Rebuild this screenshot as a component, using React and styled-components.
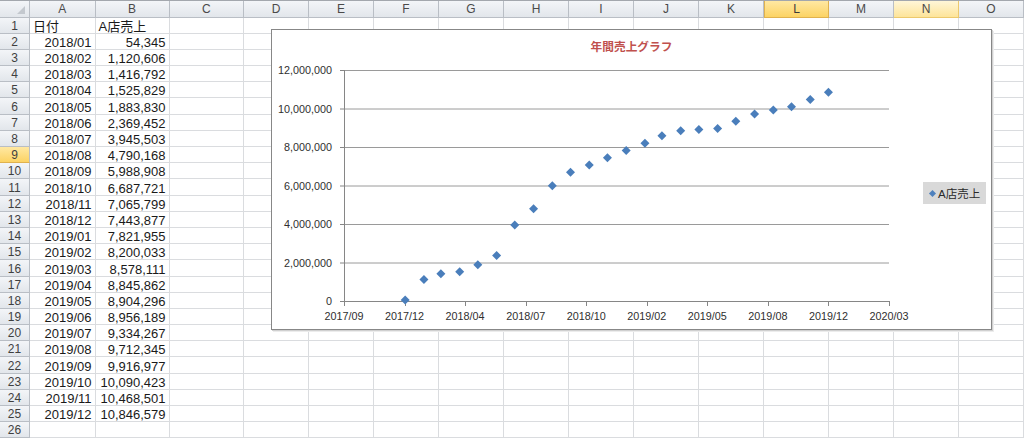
import React from 'react';
import styled, { createGlobalStyle, css } from 'styled-components';

const Global = createGlobalStyle`
  html, body { margin: 0; padding: 0; background: #ffffff; }
  body { font-family: "Liberation Sans", "Noto Sans CJK JP", sans-serif; overflow: hidden; }
`;

const COLS = ['A', 'B', 'C', 'D', 'E', 'F', 'G', 'H', 'I', 'J', 'K', 'L', 'M', 'N', 'O'];
const VALUES = [
  54345, 1120606, 1416792, 1525829, 1883830, 2369452, 3945503, 4790168, 5988908, 6687721,
  7065799, 7443877, 7821955, 8200033, 8578111, 8845862, 8904296, 8956189, 9334267, 9712345,
  9916977, 10090423, 10468501, 10846579,
];
const DATA = VALUES.map((v, i) => {
  const y = 2018 + Math.floor(i / 12);
  const m = (i % 12) + 1;
  return { y, m, label: `${y}/${String(m).padStart(2, '0')}`, value: v };
});

const serial = (y, m, d = 1) => (Date.UTC(y, m - 1, d) - Date.UTC(1899, 11, 30)) / 86400000;
const fromSerial = (s) => {
  const d = new Date(Date.UTC(1899, 11, 30) + s * 86400000);
  return `${d.getUTCFullYear()}/${String(d.getUTCMonth() + 1).padStart(2, '0')}`;
};

const Page = styled.div`
  position: relative;
  width: 1024px;
  height: 440px;
  overflow: hidden;
  border-top: 1px solid #a3a7ad;
  box-sizing: border-box;
`;

const Sheet = styled.div`
  display: grid;
  grid-template-columns: 30px 65.5px 74px 74.5px repeat(12, 65px);
  grid-template-rows: 16.5px repeat(26, 16.2px);
`;

const headerBg = css`
  background: linear-gradient(#f3f5f8, #e2e6eb);
  color: #3c3c3c;
  border-right: 1px solid #b9bec5;
  border-bottom: 1px solid #b9bec5;
`;

const Corner = styled.div`
  ${headerBg};
  position: relative;
  &::after {
    content: '';
    position: absolute;
    right: 4px;
    bottom: 3px;
    border-style: solid;
    border-width: 0 0 8px 8px;
    border-color: transparent transparent #c3c8ce transparent;
  }
`;

const ColHeader = styled.div`
  ${headerBg};
  display: flex;
  align-items: flex-end;
  justify-content: center;
  font-size: 12px;
  line-height: 13px;
  padding-bottom: 1px;
  color: #4a4a4a;
  ${(p) =>
    p.$state === 'active' &&
    css`
      background: linear-gradient(#ffe8a2, #fcd364);
      border-right-color: #e0b24e;
      border-bottom-color: #e0b24e;
      border-left: 1px solid #e0b24e;
      color: #3a3a3a;
    `}
  ${(p) =>
    p.$state === 'hover' &&
    css`
      background: linear-gradient(#fff6d8, #fde49a);
      border-right-color: #ecc96e;
      border-bottom-color: #ecc96e;
    `}
`;

const RowHeader = styled.div`
  ${headerBg};
  display: flex;
  align-items: flex-end;
  justify-content: center;
  font-size: 12px;
  line-height: 13px;
  color: #3f3f3f;
  ${(p) =>
    p.$active &&
    css`
      background: linear-gradient(#ffe8a2, #fcd364);
      border-bottom-color: #e0b24e;
    `}
`;

const Cell = styled.div`
  border-right: 1px solid #dadcdf;
  border-bottom: 1px solid #dadcdf;
  display: flex;
  align-items: flex-end;
  justify-content: ${(p) => (p.$align === 'right' ? 'flex-end' : 'flex-start')};
  padding: 0 3px 0 3px;
  font-size: 13px;
  line-height: 13px;
  color: #1a1a1a;
  white-space: nowrap;
  overflow: visible;
  min-width: 0;
`;

const ChartBox = styled.div`
  position: absolute;
  left: 271px;
  top: 28px;
  width: 721px;
  height: 301px;
  background: #fff;
  border: 1px solid #878787;
  box-shadow: 1px 1px 0 #d0d0d0, 2px 2px 0 #ececec;
  box-sizing: border-box;
`;

const ChartTitle = styled.div`
  position: absolute;
  left: 0;
  right: 0;
  top: 7px;
  text-align: center;
  font-family: "Noto Sans CJK JP", sans-serif;
  font-weight: 700;
  font-size: 11.7px;
  color: #c0504d;
`;

const Legend = styled.div`
  position: absolute;
  left: 651px;
  top: 152px;
  width: 63px;
  height: 22px;
  background: #d9d9d9;
  display: flex;
  align-items: center;
  gap: 2px;
  padding-left: 7px;
  box-sizing: border-box;
  font-family: "Liberation Sans", "Noto Sans CJK JP", sans-serif;
  font-size: 11.5px;
  color: #2a2a2a;
`;

const LegendMark = styled.span`
  width: 5px;
  height: 5px;
  background: #4f81bd;
  transform: rotate(45deg);
  flex: none;
  margin-right: 1px;
`;

const PlotSvg = styled.svg`
  position: absolute;
  left: -1px;
  top: -1px;
  overflow: visible;
`;

const X0 = 73;
const X1 = 618;
const Y0 = 272;
const YTOP = 41;
const xs = (s) => X0 + ((s - 43000) * (X1 - X0)) / 900;
const ys = (v) => Y0 - (v * (Y0 - YTOP)) / 12000000;

function Chart() {
  const levels = [0, 2e6, 4e6, 6e6, 8e6, 10e6, 12e6];
  const ticks = [];
  for (let s = 43000; s <= 43900; s += 100) ticks.push(s);
  return (
    <ChartBox>
      <ChartTitle>年間売上グラフ</ChartTitle>
      <PlotSvg width="721" height="301" viewBox="0 0 721 301">
        {levels.slice(1).map((v) => (
          <line key={v} x1={X0} x2={X1} y1={ys(v) + 0.5} y2={ys(v) + 0.5} stroke="#9a9a9a" strokeWidth="1" />
        ))}
        <line x1={X0 + 0.5} x2={X0 + 0.5} y1={YTOP} y2={Y0 + 0.5} stroke="#868686" />
        <line x1={X0} x2={X1 + 0.5} y1={Y0 + 0.5} y2={Y0 + 0.5} stroke="#868686" />
        {levels.map((v) => (
          <g key={'t' + v}>
            <line x1={X0 - 4} x2={X0} y1={ys(v) + 0.5} y2={ys(v) + 0.5} stroke="#868686" />
            <text
              x={X0 - 12}
              y={ys(v) + 4}
              textAnchor="end"
              fontSize="10.8"
              fontFamily="Liberation Sans, sans-serif"
              fill="#2f2f2f"
            >
              {v.toLocaleString('en-US')}
            </text>
          </g>
        ))}
        {ticks.map((s) => (
          <g key={s}>
            <line x1={Math.round(xs(s)) + 0.5} x2={Math.round(xs(s)) + 0.5} y1={Y0} y2={Y0 + 5} stroke="#868686" />
            <text
              x={xs(s)}
              y={Y0 + 19}
              textAnchor="middle"
              fontSize="10.8"
              fontFamily="Liberation Sans, sans-serif"
              fill="#2f2f2f"
            >
              {fromSerial(s)}
            </text>
          </g>
        ))}
        {DATA.map((d) => {
          const cx = xs(serial(d.y, d.m));
          const cy = ys(d.value);
          return (
            <polygon
              key={d.label}
              points={`${cx},${cy - 4.5} ${cx + 4.5},${cy} ${cx},${cy + 4.5} ${cx - 4.5},${cy}`}
              fill="#4a7ebb"
            />
          );
        })}
      </PlotSvg>
      <Legend>
        <LegendMark />
        <span>A店売上</span>
      </Legend>
    </ChartBox>
  );
}

export default function App() {
  const rows = [];
  for (let r = 1; r <= 26; r++) {
    let a = '';
    let b = '';
    if (r === 1) {
      a = '日付';
      b = 'A店売上';
    } else if (r <= 25) {
      a = DATA[r - 2].label;
      b = DATA[r - 2].value.toLocaleString('en-US');
    }
    rows.push({ r, a, b });
  }
  return (
    <>
      <Global />
      <Page>
        <Sheet>
          <Corner />
          {COLS.map((c) => (
            <ColHeader key={c} $state={c === 'L' ? 'active' : c === 'N' ? 'hover' : undefined}>
              {c}
            </ColHeader>
          ))}
          {rows.map(({ r, a, b }) => (
            <React.Fragment key={r}>
              <RowHeader $active={r === 9}>{r}</RowHeader>
              <Cell $align={r === 1 ? 'left' : 'right'}>{a}</Cell>
              <Cell $align={r === 1 ? 'left' : 'right'}>{b}</Cell>
              {COLS.slice(2).map((c) => (
                <Cell key={c} />
              ))}
            </React.Fragment>
          ))}
        </Sheet>
        <Chart />
      </Page>
    </>
  );
}
